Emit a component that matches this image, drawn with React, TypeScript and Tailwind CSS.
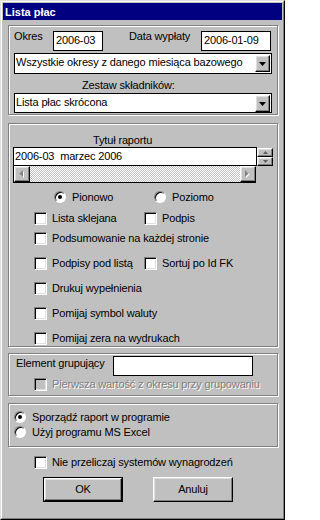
import React from 'react';

const raised =
  'border border-t-white border-l-white border-r-black border-b-black shadow-[inset_-1px_-1px_0_#808080,inset_1px_1px_0_#dfdfdf]';
const etched = 'border border-[#808080] shadow-[inset_1px_1px_0_#fff,1px_1px_0_#fff]';
const dither =
  'bg-[repeating-conic-gradient(#c0c0c0_0%_25%,#ffffff_0%_50%)] bg-[length:2px_2px]';

function Field({ className = '', children }: { className?: string; children?: React.ReactNode }) {
  return (
    <div
      className={`h-[20px] shrink-0 bg-white border border-black pl-[2px] pt-[1px] leading-[15px] whitespace-nowrap overflow-hidden ${className}`}
    >
      {children}
    </div>
  );
}

function DownArrow() {
  return (
    <svg width="7" height="4" viewBox="0 0 7 4">
      <polygon points="0,0 7,0 3.5,4" fill="#000" />
    </svg>
  );
}

function Combo({ text, h, pt }: { text: string; h: string; pt: string }) {
  return (
    <div className={`ml-[5px] w-[258px] ${h} shrink-0 bg-white border border-black flex items-start`}>
      <span className={`pl-px ${pt} whitespace-nowrap`}>{text}</span>
      <div className={`ml-auto mt-px mr-px w-[15px] h-[17px] shrink-0 bg-[#c0c0c0] ${raised} flex items-center justify-center`}>
        <DownArrow />
      </div>
    </div>
  );
}

function Check({ disabled }: { disabled?: boolean }) {
  return (
    <span
      className={`block w-[13px] h-[13px] shrink-0 border border-t-[#808080] border-l-[#808080] border-r-white border-b-white shadow-[inset_1px_1px_0_#000,inset_-1px_-1px_0_#dfdfdf] ${
        disabled ? 'bg-[#c0c0c0]' : 'bg-white'
      }`}
    />
  );
}

function Radio({ checked }: { checked?: boolean }) {
  return (
    <span className="flex items-center justify-center w-[12px] h-[12px] shrink-0 rounded-full bg-white border border-t-[#808080] border-l-[#808080] border-r-white border-b-white shadow-[inset_1px_1px_0_#000]">
      {checked && <span className="block w-[4px] h-[4px] rounded-full bg-black" />}
    </span>
  );
}

function CheckItem({ label, className = '' }: { label: string; className?: string }) {
  return (
    <div className={`flex items-center gap-[5px] ${className}`}>
      <Check />
      <span className="whitespace-nowrap">{label}</span>
    </div>
  );
}

function ScrollBtn({ dir }: { dir: 'left' | 'right' }) {
  const pts = dir === 'left' ? '4,0 4,7 0.5,3.5' : '0,0 0,7 3.5,3.5';
  return (
    <div className={`w-[16px] h-[16px] bg-[#c0c0c0] ${raised} flex items-center justify-center`}>
      <svg width="6" height="9" viewBox="0 0 6 9">
        <polygon points={pts} transform="translate(1,1)" fill="#fff" />
        <polygon points={pts} fill="#808080" />
      </svg>
    </div>
  );
}

function SpinBtn({ up }: { up?: boolean }) {
  return (
    <div className={`w-[16px] h-[9px] bg-[#c0c0c0] ${raised} flex items-center justify-center`}>
      <svg width="5" height="3" viewBox="0 0 5 3">
        <polygon points={up ? '0,3 5,3 2.5,0' : '0,0 5,0 2.5,3'} fill="#606060" />
      </svg>
    </div>
  );
}

export default function App() {
  return (
    <div className="w-[285px] h-[520px] bg-[#c0c0c0] border border-t-[#dfdfdf] border-l-[#dfdfdf] border-r-black border-b-black text-[11px] tracking-[-0.15px] leading-[15px] text-black font-['Liberation_Sans',Arial,sans-serif]">
      <div className="h-full border border-t-white border-l-white border-r-[#808080] border-b-[#808080] p-px flex flex-col">
        {/* Title bar */}
        <div className="h-[17px] shrink-0 bg-[#000080] text-white font-bold text-[11px] tracking-normal leading-[13px] pl-[2px] pt-[3px]">
          Lista płac
        </div>

        {/* Okres / zestaw */}
        <div className={`ml-[5px] mt-[5px] w-[270px] h-[90px] shrink-0 ${etched} flex flex-col`}>
          <div className="flex items-start mt-[3px]">
            <span className="ml-[5px] w-[39px] shrink-0">Okres</span>
            <Field className="mt-[2px] w-[50px]">2006-03</Field>
            <span className="ml-[26px] w-[72px] shrink-0 whitespace-nowrap">Data wypłaty</span>
            <Field className="mt-[2px] w-[70px]">2006-01-09</Field>
          </div>
          <div className="mt-[2px]">
            <Combo text="Wszystkie okresy z danego miesiąca bazowego" h="h-[21px]" pt="pt-px" />
          </div>
          <span className="mt-[4px] ml-[73px]">Zestaw składników:</span>
          <Combo text="Lista płac skrócona" h="h-[20px]" pt="pt-px" />
        </div>

        {/* Raport */}
        <div className={`ml-[5px] mt-[8px] w-[270px] h-[224px] shrink-0 ${etched} flex flex-col`}>
          <span className="mt-[9px] ml-[84px] leading-[14px]">Tytuł raportu</span>
          <div className="flex ml-[4px]">
            <div className="w-[244px] flex flex-col">
              <div className="h-[19px] bg-white border border-black pl-px pt-px whitespace-pre">2006-03  marzec 2006</div>
              <div className={`h-[17px] w-[243px] flex border-l border-b border-black ${dither}`}>
                <ScrollBtn dir="left" />
                <div className="flex-1" />
                <ScrollBtn dir="right" />
              </div>
            </div>
            <div className="mt-px flex flex-col">
              <SpinBtn up />
              <SpinBtn />
            </div>
          </div>

          <div className="flex items-center h-[12px] mt-[8px]">
            <div className="ml-[45px] w-[100px] flex items-center">
              <Radio checked />
              <span className="ml-[6px]">Pionowo</span>
            </div>
            <div className="flex items-center">
              <Radio />
              <span className="ml-[6px]">Poziomo</span>
            </div>
          </div>

          <div className="flex items-center h-[13px] mt-[9px]">
            <CheckItem label="Lista sklejana" className="ml-[25px] w-[110px]" />
            <CheckItem label="Podpis" />
          </div>
          <div className="flex items-center h-[13px] mt-[7px]">
            <CheckItem label="Podsumowanie na każdej stronie" className="ml-[25px]" />
          </div>
          <div className="flex items-center h-[13px] mt-[12px]">
            <CheckItem label="Podpisy pod listą" className="ml-[25px] w-[110px]" />
            <CheckItem label="Sortuj po Id FK" />
          </div>
          <div className="flex items-center h-[13px] mt-[12px]">
            <CheckItem label="Drukuj wypełnienia" className="ml-[25px]" />
          </div>
          <div className="flex items-center h-[13px] mt-[12px]">
            <CheckItem label="Pomijaj symbol waluty" className="ml-[25px]" />
          </div>
          <div className="flex items-center h-[13px] mt-[12px]">
            <CheckItem label="Pomijaj zera na wydrukach" className="ml-[25px]" />
          </div>
        </div>

        {/* Grupowanie */}
        <div className={`ml-[5px] mt-[6px] w-[270px] h-[43px] shrink-0 ${etched} flex flex-col`}>
          <div className="flex items-start mt-[2px]">
            <span className="ml-[7px] w-[97px] shrink-0 whitespace-nowrap">Element grupujący</span>
            <Field className="w-[140px]" />
          </div>
          <div className="flex items-center h-[13px] mt-[2px] ml-[25px] gap-[5px]">
            <Check disabled />
            <span className="whitespace-nowrap text-[#808080] [text-shadow:1px_1px_0_#fff]">
              Pierwsza wartość z okresu przy grupowaniu
            </span>
          </div>
        </div>

        {/* Program */}
        <div className={`ml-[5px] mt-[7px] w-[270px] h-[44px] shrink-0 ${etched} flex flex-col`}>
          <div className="flex items-center h-[12px] mt-[7px] ml-[5px]">
            <Radio checked />
            <span className="ml-[6px] whitespace-nowrap">Sporządź raport w programie</span>
          </div>
          <div className="flex items-center h-[12px] mt-[3px] ml-[5px]">
            <Radio />
            <span className="ml-[6px] whitespace-nowrap">Użyj programu MS Excel</span>
          </div>
        </div>

        <div className="flex items-center h-[13px] mt-[9px]">
          <CheckItem label="Nie przeliczaj systemów wynagrodzeń" className="ml-[31px]" />
        </div>

        <div className="flex mt-[8px]">
          <div className="ml-[40px] w-[80px] h-[25px] border border-black">
            <div className={`h-full bg-[#c0c0c0] ${raised} flex items-center justify-center`}>OK</div>
          </div>
          <div className={`ml-[30px] w-[80px] h-[25px] bg-[#c0c0c0] ${raised} flex items-center justify-center`}>
            Anuluj
          </div>
        </div>
      </div>
    </div>
  );
}
